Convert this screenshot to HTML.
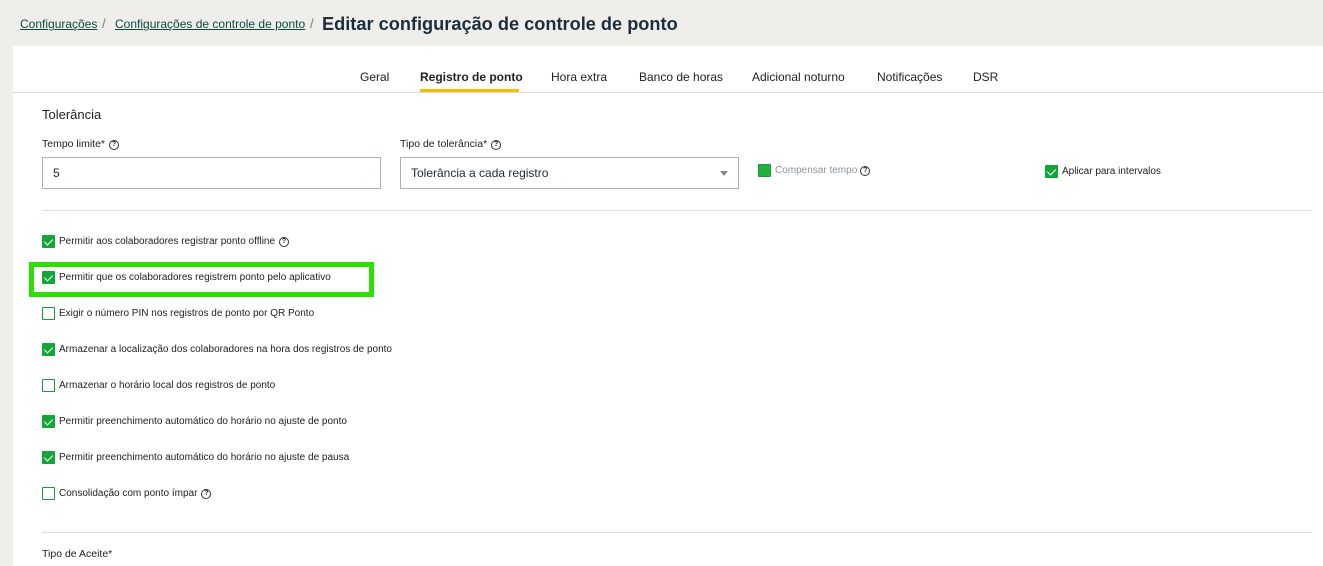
<!DOCTYPE html>
<html><head><meta charset="utf-8"><style>
*{box-sizing:border-box;margin:0;padding:0}
body{width:1323px;height:556px;overflow:hidden;background:#efeeeb;font-family:"Liberation Sans",sans-serif;color:#1e2a33;position:relative}
.a{position:absolute;white-space:nowrap}
.bc{font-size:12px;color:#0c4a3a;text-decoration:underline}
.panel{position:absolute;left:13px;top:46px;width:1310px;height:520px;background:#fff}
.tab{font-size:12px;top:70px;color:#222}
.lbl{font-size:10.5px;color:#222}
.inp{position:absolute;border:1px solid #a9b3bc;height:32px;background:#fff;font-size:12px;padding:8px 0 0 10px}
.q{display:inline-block;width:10px;height:10px;border:1px solid #333;border-radius:50%;font-size:7px;text-align:center;line-height:8px;vertical-align:1px;margin-left:4px;font-weight:bold}
.cb{position:absolute;left:42px;width:13px;height:13px;border:1px solid #1a9a3a;border-radius:1px;background:#fff}
.cb.on{background:#13a538;border-color:#13a538}
.cb.on::after{content:"";position:absolute;left:3px;top:1px;width:4px;height:7px;border:solid #fff;border-width:0 1.5px 1.5px 0;transform:rotate(45deg)}
.cb.full{background:#1db33e;border-color:#1a9a3a}
.ct{position:absolute;left:59px;font-size:10px;color:#222;top:1px}
</style></head><body>
<div class="a bc" style="left:20px;top:17px">Configurações</div>
<div class="a" style="left:102px;top:16px;font-size:13px;color:#777">/</div>
<div class="a bc" style="left:115px;top:17px">Configurações de controle de ponto</div>
<div class="a" style="left:310px;top:16px;font-size:13px;color:#777">/</div>
<div class="a" style="left:322px;top:14px;font-size:18.2px;font-weight:bold;color:#1b2e3c">Editar configuração de controle de ponto</div>
<div class="panel"></div>
<div class="a tab" style="left:360px">Geral</div>
<div class="a tab" style="left:420px;font-weight:bold">Registro de ponto</div>
<div class="a" style="left:420px;top:89px;width:99px;height:3px;background:#f5bc00"></div>
<div class="a tab" style="left:551px">Hora extra</div>
<div class="a tab" style="left:639px">Banco de horas</div>
<div class="a tab" style="left:752px">Adicional noturno</div>
<div class="a tab" style="left:877px">Notificações</div>
<div class="a tab" style="left:973px">DSR</div>
<div class="a" style="left:13px;top:92px;width:1310px;height:1px;background:#ddd"></div>
<div class="a" style="left:42px;top:107px;font-size:13px;color:#222">Tolerância</div>
<div class="a lbl" style="left:42px;top:138px">Tempo limite*<span class="q">?</span></div>
<div class="a lbl" style="left:400px;top:138px">Tipo de tolerância*<span class="q">?</span></div>
<div class="inp" style="left:42px;top:157px;width:339px">5</div>
<div class="inp" style="left:400px;top:157px;width:339px">Tolerância a cada registro<span style="position:absolute;right:10px;top:13px;border:4px solid transparent;border-top:5px solid #888"></span></div>
<div class="cb full" style="left:758px;top:164px"></div>
<div class="a" style="left:775px;top:165px;font-size:10px;color:#8a949c">Compensar tempo<span class="q" style="margin-left:3px;color:#333">?</span></div>
<div class="cb on" style="left:1045px;top:165px"></div>
<div class="a" style="left:1062px;top:166px;font-size:10px;color:#222">Aplicar para intervalos</div>
<div class="a" style="left:42px;top:210px;width:1270px;height:1px;background:#ddd"></div>
<div class="a" style="left:29px;top:262px;width:345px;height:35px;border:5px solid #2de000"></div>
<div class="cb on" style="top:235px"></div><div class="ct" style="top:236px">Permitir aos colaboradores registrar ponto offline<span class="q">?</span></div>
<div class="cb on" style="top:271px"></div><div class="ct" style="top:272px">Permitir que os colaboradores registrem ponto pelo aplicativo</div>
<div class="cb" style="top:307px"></div><div class="ct" style="top:308px">Exigir o número PIN nos registros de ponto por QR Ponto</div>
<div class="cb on" style="top:343px"></div><div class="ct" style="top:344px">Armazenar a localização dos colaboradores na hora dos registros de ponto</div>
<div class="cb" style="top:379px"></div><div class="ct" style="top:380px">Armazenar o horário local dos registros de ponto</div>
<div class="cb on" style="top:415px"></div><div class="ct" style="top:416px">Permitir preenchimento automático do horário no ajuste de ponto</div>
<div class="cb on" style="top:451px"></div><div class="ct" style="top:452px">Permitir preenchimento automático do horário no ajuste de pausa</div>
<div class="cb" style="top:487px"></div><div class="ct" style="top:488px">Consolidação com ponto ímpar<span class="q">?</span></div>
<div class="a" style="left:42px;top:532px;width:1270px;height:1px;background:#ddd"></div>
<div class="a lbl" style="left:42px;top:548px">Tipo de Aceite*</div>
</body></html>
